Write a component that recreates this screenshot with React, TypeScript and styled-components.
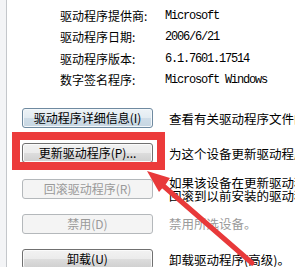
import React from "react";
import styled, { createGlobalStyle, css } from "styled-components";

const Global = createGlobalStyle`
  html, body { margin: 0; padding: 0; background: #ffffff; }
  body { width: 295px; height: 267px; overflow: hidden; }
`;

const Frame = styled.div`
  position: relative;
  width: 295px;
  height: 267px;
  overflow: hidden;
  display: flex;
  background: #ffffff;
  font-family: "Noto Sans CJK SC", sans-serif;
  color: #000;
`;

const Strip = styled.div`
  width: 6px;
  flex: none;
  background: #f3f4f6;
  border-right: 1px solid #c4c7cb;
`;

const Content = styled.div`
  flex: 1;
  display: flex;
  flex-direction: column;
  padding-top: 5px;
`;

const InfoGrid = styled.div`
  display: grid;
  grid-template-columns: 105px auto;
  grid-auto-rows: 21.5px;
  align-items: center;
  margin-left: 53px;
`;

const Label = styled.div`
  font-size: 12px;
  line-height: 14px;
  white-space: nowrap;
`;

const Value = styled.div`
  font-family: "Liberation Mono", "Noto Sans CJK SC", monospace;
  font-size: 12px;
  letter-spacing: -1.2px;
  line-height: 14px;
  white-space: nowrap;
`;

const Actions = styled.div`
  display: flex;
  flex-direction: column;
  gap: 15.25px;
  margin-top: 17px;
  margin-left: 15px;
`;

const ActionRow = styled.div`
  display: flex;
  align-items: center;
  gap: 16px;
  height: 20px;
`;

type Kind = "focus" | "normal" | "disabled";

const Button = styled.div<{ $kind: Kind }>`
  flex: none;
  box-sizing: border-box;
  width: 131px;
  height: 20px;
  border-radius: 3px;
  display: flex;
  align-items: center;
  justify-content: center;
  font-size: 12px;
  line-height: 14px;
  white-space: nowrap;
  ${(p) =>
    p.$kind === "focus"
      ? css`
          border: 1px solid #6f8aa0;
          background: linear-gradient(#edf3f7 0%, #e2ebf1 50%, #cfdde8 51%, #c6d6e2 100%);
          box-shadow: inset 0 0 0 1px #f4f8fb;
          color: #000;
        `
      : p.$kind === "normal"
      ? css`
          border: 1px solid #707070;
          background: linear-gradient(#f2f2f2 0%, #ebebeb 50%, #dddddd 51%, #cfcfcf 100%);
          box-shadow: inset 0 0 0 1px #fbfbfb;
          color: #000;
        `
      : css`
          border: 1px solid #b4b8bb;
          background: #f4f4f4;
          color: #9a9a9a;
        `}
`;

const Desc = styled.div<{ $muted?: boolean }>`
  font-size: 12.5px;
  line-height: 13px;
  white-space: nowrap;
  color: ${(p) => (p.$muted ? "#9a9a9a" : "#000")};
`;

const Highlight = styled.div`
  position: absolute;
  left: 12px;
  top: 132px;
  width: 153px;
  height: 38px;
  box-sizing: border-box;
  border: 8px solid #ec3b3b;
  pointer-events: none;
`;

const ArrowLayer = styled.svg`
  position: absolute;
  left: 0;
  top: 0;
  width: 295px;
  height: 267px;
  pointer-events: none;
`;

const info: [string, string][] = [
  ["驱动程序提供商:", "Microsoft"],
  ["驱动程序日期:", "2006/6/21"],
  ["驱动程序版本:", "6.1.7601.17514"],
  ["数字签名程序:", "Microsoft Windows"],
];

export default function App() {
  return (
    <>
      <Global />
      <Frame>
        <Strip />
        <Content>
          <InfoGrid>
            {info.map(([l, v]) => (
              <React.Fragment key={l}>
                <Label>{l}</Label>
                <Value>{v}</Value>
              </React.Fragment>
            ))}
          </InfoGrid>
          <Actions>
            <ActionRow>
              <Button $kind="focus">驱动程序详细信息(I)</Button>
              <Desc>查看有关驱动程序文件的详细信息。</Desc>
            </ActionRow>
            <ActionRow>
              <Button $kind="normal">更新驱动程序(P)...</Button>
              <Desc>为这个设备更新驱动程序软件。</Desc>
            </ActionRow>
            <ActionRow>
              <Button $kind="disabled">回滚驱动程序(R)</Button>
              <Desc>
                如果该设备在更新驱动程序时失败，
                <br />
                回滚到以前安装的驱动程序。
              </Desc>
            </ActionRow>
            <ActionRow>
              <Button $kind="disabled">禁用(D)</Button>
              <Desc $muted>禁用所选设备。</Desc>
            </ActionRow>
            <ActionRow>
              <Button $kind="normal">卸载(U)</Button>
              <Desc>卸载驱动程序(高级)。</Desc>
            </ActionRow>
          </Actions>
        </Content>
        <Highlight />
        <ArrowLayer viewBox="0 0 295 267">
          <line x1="160" y1="183" x2="252" y2="263" stroke="#e8393a" strokeWidth="5" strokeLinecap="round" />
          <polygon points="147,171 170,178 166,184 159,192" fill="#e8393a" />
        </ArrowLayer>
      </Frame>
    </>
  );
}
